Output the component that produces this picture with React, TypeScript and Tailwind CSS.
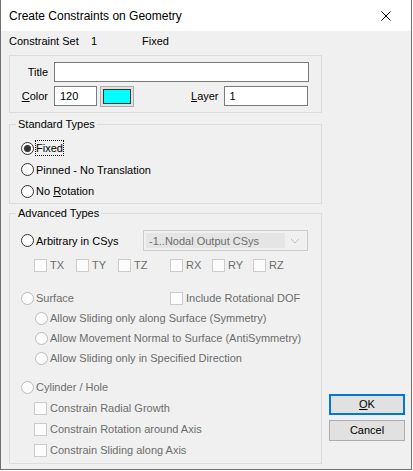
import React from 'react';

const font = { fontFamily: '"Liberation Sans", Arial, sans-serif' };

function Radio({ checked, disabled }: { checked?: boolean; disabled?: boolean }) {
    return (
        <span
            className={`flex h-[13px] w-[13px] shrink-0 items-center justify-center rounded-full border ${
                disabled ? 'border-[#bcbcbc] bg-[#fcfcfc]' : 'border-[#333333] bg-white'
            }`}
        >
            {checked && <span className="h-[7px] w-[7px] rounded-full bg-[#333333]" />}
        </span>
    );
}

function Check() {
    return <span className="h-[13px] w-[13px] shrink-0 border border-[#cccccc] bg-[#fcfcfc]" />;
}

function RadioRow({ label, checked, disabled, focus, className = '' }: { label: React.ReactNode; checked?: boolean; disabled?: boolean; focus?: boolean; className?: string }) {
    return (
        <div className={`flex h-[20px] items-center gap-[2px] ${className}`}>
            <Radio checked={checked} disabled={disabled} />
            <span className={`${disabled ? 'text-[#6d6d6d]' : 'text-black'} ${focus ? 'outline outline-1 outline-dotted outline-black' : ''} leading-[14px]`}>
                {label}
            </span>
        </div>
    );
}

function CheckRow({ label, className = '' }: { label: string; className?: string }) {
    return (
        <div className={`flex h-[20px] items-center gap-[3px] ${className}`}>
            <Check />
            <span className="text-[#6d6d6d]">{label}</span>
        </div>
    );
}

const dofs = [
    { name: 'TX', w: 'w-[42px]' },
    { name: 'TY', w: 'w-[42px]' },
    { name: 'TZ', w: 'w-[52px]' },
    { name: 'RX', w: 'w-[42px]' },
    { name: 'RY', w: 'w-[41px]' },
    { name: 'RZ', w: 'w-[40px]' },
];

export default function App() {
    return (
        <div className="h-[471px] w-[413px] bg-white text-[11px] leading-[14px] text-black" style={font}>
            <div className="flex h-[470px] w-[412px] flex-col border-x border-b border-[#707070] bg-[#f0f0f0]">
                {/* title bar */}
                <div className="flex h-[31px] shrink-0 items-center justify-between bg-white pl-[8px] pr-[20px]">
                    <span className="text-[12px]">Create Constraints on Geometry</span>
                    <svg width="10" height="10" viewBox="0 0 10 10" className="text-black">
                        <path d="M0.5 0.5 L9.5 9.5 M9.5 0.5 L0.5 9.5" stroke="currentColor" strokeWidth="1" />
                    </svg>
                </div>

                <div className="flex h-[20px] shrink-0 items-center pl-[8px]">
                    <span className="w-[82px]">Constraint Set</span>
                    <span className="w-[51px]">1</span>
                    <span>Fixed</span>
                </div>

                <div className="flex flex-1 gap-[7px] pl-[8px]">
                    <div className="flex w-[313px] flex-col">
                        {/* title / color / layer */}
                        <div className="mt-[4px] flex flex-col gap-[4px] border border-[#dcdcdc] pb-[6px] pt-[6px]">
                            <div className="flex h-[20px] items-center">
                                <span className="w-[38px] text-right">Title</span>
                                <span className="ml-[6px] h-[20px] w-[255px] border border-[#7a7a7a] bg-white" />
                            </div>
                            <div className="flex h-[20px] items-center">
                                <span className="w-[38px] text-right">
                                    <u>C</u>olor
                                </span>
                                <span className="ml-[6px] flex h-[20px] w-[43px] items-center border border-[#7a7a7a] bg-white pl-[5px]">120</span>
                                <span className="ml-[3px] flex h-[21px] w-[34px] items-center justify-center border border-[#adadad] bg-[#e1e1e1]">
                                    <span className="h-[15px] w-[28px] border border-[#333333] bg-[#00ffff]" />
                                </span>
                                <span className="ml-[57px]">
                                    <u>L</u>ayer
                                </span>
                                <span className="ml-[5px] flex h-[20px] w-[84px] items-center border border-[#7a7a7a] bg-white pl-[5px]">1</span>
                            </div>
                        </div>

                        {/* standard types */}
                        <fieldset className="mt-[4px] border border-[#dcdcdc] pb-[2px] pl-[11px]">
                            <legend className="ml-[-5px] px-[2px] leading-[14px]">Standard Types</legend>
                            <div className="mt-[7px] flex flex-col gap-[1.5px]">
                                <RadioRow checked focus label="Fixed" />
                                <RadioRow label="Pinned - No Translation" />
                                <RadioRow
                                    label={
                                        <>
                                            No <u>R</u>otation
                                        </>
                                    }
                                />
                            </div>
                        </fieldset>

                        {/* advanced types */}
                        <fieldset className="mt-[2px] flex-1 border border-[#dcdcdc] pb-[3px] pl-[11px]">
                            <legend className="ml-[-5px] px-[2px] leading-[14px]">Advanced Types</legend>
                            <div className="mt-[10px] flex h-[21px] items-center">
                                <div className="w-[122px]">
                                    <RadioRow label="Arbitrary in CSys" />
                                </div>
                                <div className="flex h-[21px] w-[165px] items-center border border-[#cccccc] bg-[#f0f0f0] p-[2px]">
                                    <span className="flex h-full flex-1 items-center bg-[#e5e5e5] pl-[3px] text-[#6d6d6d]">-1..Nodal Output CSys</span>
                                    <svg width="20" height="10" viewBox="0 0 20 10">
                                        <path d="M6 3 L10 7 L14 3" fill="none" stroke="#bfbfbf" strokeWidth="1" />
                                    </svg>
                                </div>
                            </div>
                            <div className="ml-[13px] mt-[4px] flex h-[20px] items-center">
                                {dofs.map((d) => (
                                    <div key={d.name} className={`flex items-center gap-[3px] ${d.w}`}>
                                        <Check />
                                        <span className="text-[#6d6d6d]">{d.name}</span>
                                    </div>
                                ))}
                            </div>
                            <div className="mt-[13px] flex h-[20px] items-center">
                                <div className="w-[149px]">
                                    <RadioRow disabled label="Surface" />
                                </div>
                                <Check />
                                <span className="ml-[3px] text-[#6d6d6d]">Include Rotational DOF</span>
                            </div>
                            <div className="ml-[14px] flex flex-col">
                                <RadioRow disabled label="Allow Sliding only along Surface (Symmetry)" />
                                <RadioRow disabled label="Allow Movement Normal to Surface (AntiSymmetry)" />
                                <RadioRow disabled label="Allow Sliding only in Specified Direction" />
                            </div>
                            <RadioRow disabled label="Cylinder / Hole" className="mt-[9px]" />
                            <div className="ml-[13px] mt-[1px] flex flex-col gap-[1px]">
                                <CheckRow label="Constrain Radial Growth" />
                                <CheckRow label="Constrain Rotation around Axis" />
                                <CheckRow label="Constrain Sliding along Axis" />
                            </div>
                        </fieldset>
                    </div>

                    {/* buttons */}
                    <div className="flex flex-col justify-end gap-[5px] pb-[23px]">
                        <button className="h-[21px] w-[76px] border-2 border-[#0078d7] bg-[#e1e1e1] leading-none">
                            <u>O</u>K
                        </button>
                        <button className="h-[21px] w-[76px] border border-[#adadad] bg-[#e1e1e1] leading-none">Cancel</button>
                    </div>
                </div>
                <div className="h-[6px] shrink-0" />
            </div>
        </div>
    );
}
